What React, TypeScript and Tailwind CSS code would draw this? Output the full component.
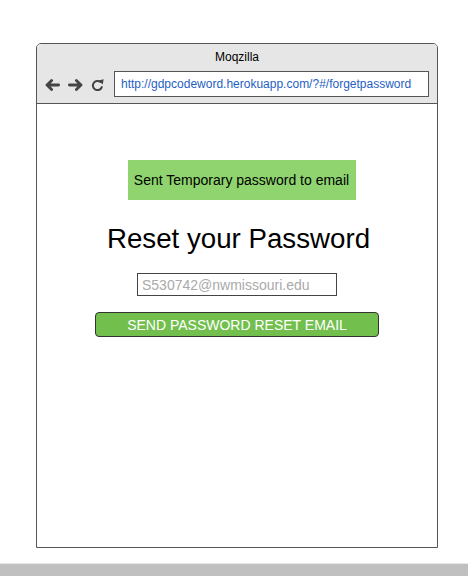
export default function App() {
  return (
    <div className="w-[468px] h-[576px] bg-white flex flex-col overflow-hidden font-['Liberation_Sans',Arial,sans-serif]">
      <div className="flex-1">
        {/* browser window mock */}
        <div className="ml-[36px] mt-[43px] w-[402px] h-[505px] border border-[#555] rounded-t-[5px] flex flex-col overflow-hidden">
          <div className="h-[60px] bg-[#e6e6e6] border-b border-[#555] flex flex-col">
            <div className="text-[12px] text-black text-center pt-[5px] leading-[16px]">Moqzilla</div>
            <div className="flex items-center mt-[6px]">
              <div className="flex items-center pl-[8px] w-[77px] text-[#444] pt-[2px]">
                <svg width="15" height="12" viewBox="0 0 15 12" fill="none" stroke="currentColor" strokeWidth="2.8" strokeLinecap="round" strokeLinejoin="round">
                  <path d="M13.6 6H2M6.6 1.5L2 6l4.6 4.5" />
                </svg>
                <svg className="ml-[8px]" width="15" height="12" viewBox="0 0 15 12" fill="none" stroke="currentColor" strokeWidth="2.8" strokeLinecap="round" strokeLinejoin="round">
                  <path d="M1.4 6H13M8.4 1.5L13 6l-4.6 4.5" />
                </svg>
                <svg className="ml-[8px]" width="14" height="14" viewBox="0 0 14 14" fill="none" stroke="currentColor" strokeWidth="2" strokeLinecap="round">
                  <path d="M9.46 3.98A4.6 4.6 0 1 0 10.82 9.07" />
                  <polygon points="7.4,2.6 12.6,1.2 11.8,6.4" fill="currentColor" stroke="none" />
                </svg>
              </div>
              <div className="w-[315px] h-[26px] bg-white border border-[#555] flex items-center pl-[6px] text-[12px] text-[#1f5fc4]">
                http://gdpcodeword.herokuapp.com/?#/forgetpassword
              </div>
            </div>
          </div>
          <div className="flex-1 bg-white flex flex-col items-center">
            <div className="mt-[56px] ml-[9px] w-[228px] h-[40px] bg-[#8fd46e] flex items-center justify-center text-[14px] text-black">
              Sent Temporary password to email
            </div>
            <h1 className="mt-[22px] ml-[3px] text-[27.7px] leading-[34px] text-black">Reset your Password</h1>
            <input
              className="mt-[17px] w-[200px] h-[23px] border border-[#444] px-[4px] text-[14px] text-[#aaa] placeholder:text-[#aaa] outline-none"
              placeholder="S530742@nwmissouri.edu"
            />
            <button className="mt-[16px] w-[284px] h-[25px] rounded-[4px] bg-[#72bf4e] border border-[#333] text-white text-[14px] leading-[20px]">
              SEND PASSWORD RESET EMAIL
            </button>
          </div>
        </div>
      </div>
      <div className="h-[13px] bg-[#c0c0c0] border-t border-[#e8e8e8]" />
    </div>
  );
}
